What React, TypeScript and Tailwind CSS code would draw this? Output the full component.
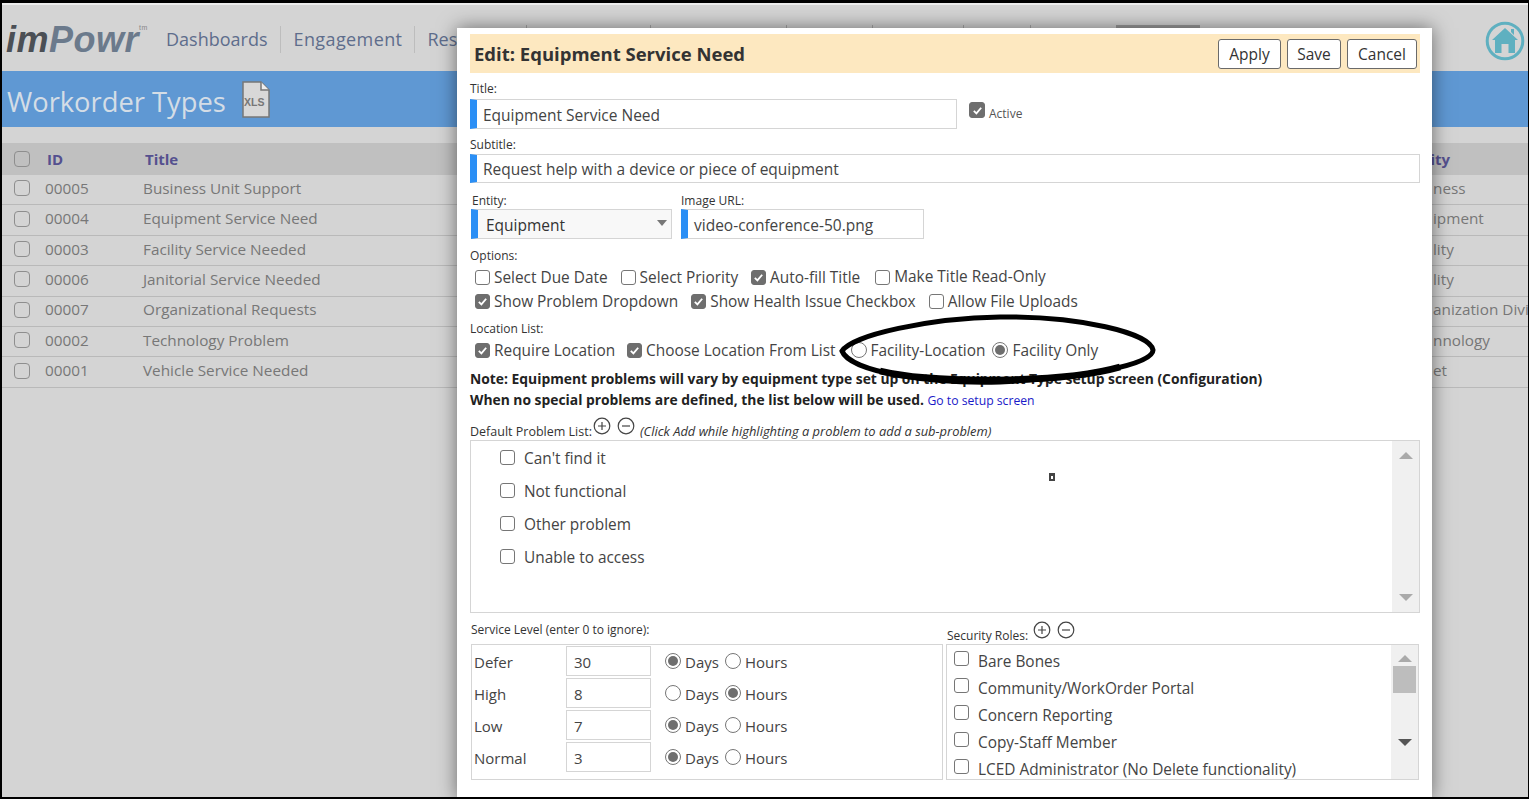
import React from "react";

const font = "font-['Open_Sans','Noto_Sans',sans-serif]";

const rows = [
  ["00005", "Business Unit Support", "ness"],
  ["00004", "Equipment Service Need", "ipment"],
  ["00003", "Facility Service Needed", "lity"],
  ["00006", "Janitorial Service Needed", "lity"],
  ["00007", "Organizational Requests", "anization Divi"],
  ["00002", "Technology Problem", "nnology"],
  ["00001", "Vehicle Service Needed", "et"],
];

function Check({ on = false, dim = false, className = "" }: { on?: boolean; dim?: boolean; className?: string }) {
  const tone = dim
    ? "w-[16px] h-[16px] rounded-[4px] border-[#8e8e8e]"
    : on
    ? "w-[15px] h-[15px] rounded-[3px] bg-[#6e6e6e] border-[#6e6e6e]"
    : "w-[15px] h-[15px] rounded-[3px] bg-white border-[#767676]";
  return (
    <span className={`inline-flex shrink-0 border items-center justify-center ${tone} ${className}`}>
      {on && (
        <svg viewBox="0 0 12 12" className="w-[11px] h-[11px]">
          <path d="M2 6.5 L4.8 9.2 L10 3" fill="none" stroke="#fff" strokeWidth="2" />
        </svg>
      )}
    </span>
  );
}

function Radio({ on = false }: { on?: boolean }) {
  return (
    <span className="inline-flex shrink-0 w-[16px] h-[16px] -translate-y-[1px] rounded-full border border-[#767676] bg-white items-center justify-center">
      {on && <span className="w-[10px] h-[10px] rounded-full bg-[#6e6e6e]" />}
    </span>
  );
}

function Opt({ on, label }: { on?: boolean; label: string }) {
  return (
    <span className="inline-flex items-center gap-[4px] text-[15.4px] text-[#444]">
      <Check on={on} />
      {label}
    </span>
  );
}

function Label({ children, className = "" }: { children: React.ReactNode; className?: string }) {
  return <div className={`text-[12px] leading-[16px] text-[#333] ${className}`}>{children}</div>;
}

function CircleBtn({ minus }: { minus?: boolean }) {
  return (
    <svg viewBox="0 0 18 18" className="w-[18px] h-[18px] shrink-0">
      <circle cx="9" cy="9" r="7.8" fill="none" stroke="#444" strokeWidth="1.2" />
      <path d={minus ? "M5 9 H13" : "M5 9 H13 M9 5 V13"} stroke="#444" strokeWidth="1.2" />
    </svg>
  );
}

function TextBox({ value, className = "" }: { value: string; className?: string }) {
  return (
    <div className={`flex items-center border border-[#d5d5d5] border-l-[7px] border-l-[#2b8ff5] bg-white pl-[6px] pt-[3px] text-[15.5px] text-[#444] ${className}`}>
      {value}
    </div>
  );
}

function ServiceRow({ label, value, days }: { label: string; value: string; days: boolean }) {
  return (
    <div className="flex items-center h-[32px] text-[15px] text-[#444]">
      <span className="w-[94px] pl-[2px] pt-[2px]">{label}</span>
      <span className="w-[85px] h-[30px] border border-[#d5d5d5] flex items-center pl-[7px] pt-[2px]">{value}</span>
      <span className="ml-[14px] flex items-center gap-[4px] pt-[2px]">
        <Radio on={days} />
        Days
      </span>
      <span className="ml-[6px] flex items-center gap-[4px] pt-[2px]">
        <Radio on={!days} />
        Hours
      </span>
    </div>
  );
}

function ScrollArrow({ up, dark }: { up?: boolean; dark?: boolean }) {
  if (up) {
    return <span className="w-0 h-0 border-x-[7px] border-x-transparent border-b-[7px] border-b-[#aaa]" />;
  }
  return (
    <span className={`w-0 h-0 border-x-[7px] border-x-transparent border-t-[7px] ${dark ? "border-t-[#555]" : "border-t-[#aaa]"}`} />
  );
}

export default function App() {
  return (
    <div className={`relative w-[1529px] h-[799px] overflow-hidden bg-[#d4d4d4] ${font}`}>
      {/* background page, dimmed */}
      <div className="flex items-center h-[71px] pl-[6px] pt-[8px]">
        <div className="flex items-baseline w-[160px] font-['Liberation_Sans',sans-serif] italic font-bold text-[36px] leading-none tracking-[0.5px]">
          <span className="text-[#4b4f55]">im</span>
          <span className="text-[#6b7a8c]">Powr</span>
          <span className="text-[7px] not-italic font-normal text-[#888] self-start mt-[2px]">tm</span>
        </div>
        <span className="text-[18px] text-[#5e6d8c] pr-[13px] border-r border-[#bdbdbd]">Dashboards</span>
        <span className="text-[18px] tracking-[0.4px] text-[#5e6d8c] px-[12px] border-r border-[#bdbdbd]">Engagement</span>
        <span className="text-[18px] text-[#5e6d8c] pl-[12px]">Res</span>
        <svg viewBox="0 0 40 40" className="absolute left-[1485px] top-[21px] w-[40px] h-[40px]">
          <circle cx="20" cy="20" r="17.8" fill="none" stroke="#5fb0c0" strokeWidth="3" />
          <path d="M20 7 L33 19 H30 V32 H23.5 V23 H16.5 V32 H10 V19 H7 Z M26 8 H29 V14 L26 11 Z" fill="#5fb0c0" />
        </svg>
      </div>
      {/* rest of the nav, only its top shows above the dialog */}
      {["left-[526px]", "left-[650px]", "left-[786px]", "left-[872px]", "left-[963px]", "left-[1030px]"].map((x) => (
        <span key={x} className={`absolute top-[25px] w-[1px] h-[3px] bg-[#a8a8a8] ${x}`} />
      ))}
      <span className="absolute top-[25px] left-[1116px] w-[84px] h-[3px] bg-[#9c9c9c]" />

      <div className="flex items-center h-[56px] bg-[#5f98d3] pl-[7px] gap-[16px]">
        <span className="text-[27.3px] text-[#d4dde6] pt-[7px]">Workorder Types</span>
        <svg viewBox="0 0 28 37" className="w-[28px] h-[37px]">
          <path d="M1 1 H19 L27 9 V36 H1 Z" fill="#d8d8d8" stroke="#777" strokeWidth="1.5" />
          <path d="M19 1 V9 H27" fill="#eee" stroke="#777" strokeWidth="1.5" />
          <text x="2" y="25" fontSize="10.5" fontWeight="700" fontFamily="Liberation Sans" fill="#777">XLS</text>
        </svg>
      </div>
      <div className="mt-[16px] flex items-center h-[32px] bg-[#c0c0c0] text-[15px] font-bold text-[#55508f]">
        <Check dim className="ml-[14px]" />
        <span className="ml-[17px] w-[98px]">ID</span>
        <span className="flex-1">Title</span>
        <span className="mr-[79px]">ity</span>
      </div>
      {rows.map((r) => (
        <div key={r[0]} className="flex items-center h-[30.4px] pb-[3px] border-b border-[#b9b9b9] text-[15.3px] text-[#777]">
          <Check dim className="ml-[14px]" />
          <span className="ml-[15px] w-[98px]">{r[0]}</span>
          <span className="flex-1">{r[1]}</span>
          <span className="absolute left-[1432px] pl-[1px]">{r[2]}</span>
        </div>
      ))}

      {/* dialog */}
      <div className="absolute left-[457px] top-[28px] w-[975px] h-[771px] bg-white shadow-[0_0_18px_rgba(0,0,0,0.5)] pl-[13px] pr-[12px] pt-[6px]">
        <div className="flex items-center justify-between h-[39px] bg-[#fde8c0] pl-[4px] pr-[3px]">
          <span className="text-[18.5px] font-bold text-[#333] pt-[1px]">Edit: Equipment Service Need</span>
          <div className="flex gap-[6px] text-[15.5px] text-[#333]">
            <span className="flex items-center justify-center w-[63px] h-[30px] pt-[3px] bg-white border border-[#6a6a6a] rounded-[3px]">Apply</span>
            <span className="flex items-center justify-center w-[54px] h-[30px] pt-[3px] bg-white border border-[#6a6a6a] rounded-[3px]">Save</span>
            <span className="flex items-center justify-center w-[70px] h-[30px] pt-[3px] bg-white border border-[#6a6a6a] rounded-[3px]">Cancel</span>
          </div>
        </div>
        <Label className="mt-[8px]">Title:</Label>
        <div className="flex mt-[2px]">
          <TextBox value="Equipment Service Need" className="w-[487px] h-[30px]" />
          <Check on className="ml-[12px] mt-[3px] w-[16px] h-[16px]" />
          <span className="ml-[4px] mt-[7px] text-[12px] leading-[16px] text-[#555]">Active</span>
        </div>
        <Label className="mt-[8px]">Subtitle:</Label>
        <TextBox value="Request help with a device or piece of equipment" className="mt-[1px] h-[29px]" />
        <div className="flex mt-[9px] pl-[1px] gap-[9px]">
          <div>
            <Label className="pl-[1px] mt-[1px]">Entity:</Label>
            <div className="flex items-center justify-between w-[201px] h-[30px] border border-[#d5d5d5] border-l-[7px] border-l-[#2b8ff5] bg-[#f8f8f8] pl-[8px] pr-[4px] pt-[3px] text-[15.5px] text-[#333]">
              Equipment
              <span className="w-0 h-0 -mt-[6px] border-x-[5px] border-x-transparent border-t-[6px] border-t-[#777]" />
            </div>
          </div>
          <div>
            <Label className="mt-[1px]">Image URL:</Label>
            <TextBox value="video-conference-50.png" className="w-[243px] h-[30px]" />
          </div>
        </div>
        <Label className="mt-[9px]">Options:</Label>
        <div className="flex gap-[13px] h-[24px] items-center mt-[2px] pl-[5px]">
          <Opt label="Select Due Date" />
          <Opt label="Select Priority" />
          <Opt on label="Auto-fill Title" />
          <span className="ml-[2px]"><Opt label="Make Title Read-Only" /></span>
        </div>
        <div className="flex gap-[13px] h-[24px] items-center pl-[5px]">
          <Opt on label="Show Problem Dropdown" />
          <Opt on label="Show Health Issue Checkbox" />
          <Opt label="Allow File Uploads" />
        </div>
        <Label className="mt-[7px]">Location List:</Label>
        <div className="flex h-[26px] items-center mt-[1px] pl-[5px] gap-[12px] text-[15.4px] text-[#444]">
          <Opt on label="Require Location" />
          <Opt on label="Choose Location From List" />
          <span className="flex items-center gap-[4px] ml-[3px]"><Radio />Facility-Location</span>
          <span className="flex items-center gap-[4px] -ml-[5px]"><Radio on />Facility Only</span>
        </div>
        <div className="mt-[4px] text-[13.85px] leading-[21px] font-bold text-[#222]">
          <div>Note: Equipment problems will vary by equipment type set up on the Equipment Type setup screen (Configuration)</div>
          <div>
            When no special problems are defined, the list below will be used.{" "}
            <span className="text-[12.2px] font-normal text-[#1a1ac8]">Go to setup screen</span>
          </div>
        </div>
        <div className="flex items-center mt-[13px] h-[16px] text-[12.5px] text-[#333]">
          Default Problem List:
          <span className="flex gap-[6px] ml-[1px] mr-[5px] -mt-[12px]"><CircleBtn /><CircleBtn minus /></span>
          <span className="italic text-[12.9px]">(Click Add while highlighting a problem to add a sub-problem)</span>
        </div>
        <div className="flex justify-between h-[173px] border border-[#d5d5d5]">
          <div className="pl-[29px] pt-[1px]">
            {["Can't find it", "Not functional", "Other problem", "Unable to access"].map((p) => (
              <div key={p} className="flex items-center h-[33px] gap-[9px] text-[15.4px] text-[#444]">
                <Check className="-mt-[3px]" />
                {p}
              </div>
            ))}
          </div>
          <div className="flex flex-col justify-between items-center w-[27px] bg-[#f0f0f0] py-[11px]">
            <ScrollArrow up />
            <ScrollArrow />
          </div>
        </div>
        <div className="flex mt-[9px] pl-[1px] gap-[3px]">
          <div className="w-[472px]">
            <Label className="h-[22px] text-[12.3px]">Service Level (enter 0 to ignore):</Label>
            <div className="h-[136px] border border-[#d5d5d5]">
              <ServiceRow label="Defer" value="30" days />
              <ServiceRow label="High" value="8" days={false} />
              <ServiceRow label="Low" value="7" days />
              <ServiceRow label="Normal" value="3" days />
            </div>
          </div>
          <div className="w-[473px]">
            <div className="flex items-center h-[22px] text-[12px] text-[#333] gap-[5px] pl-[1px]">
              <span className="pt-[6px]">Security Roles:</span>
              <span className="flex gap-[6px] -mt-[6px]"><CircleBtn /><CircleBtn minus /></span>
            </div>
            <div className="flex h-[136px] border border-[#d5d5d5] overflow-hidden">
              <div className="flex-1 pl-[7px] pt-[3px]">
                {["Bare Bones", "Community/WorkOrder Portal", "Concern Reporting", "Copy-Staff Member", "LCED Administrator (No Delete functionality)"].map((p) => (
                  <div key={p} className="flex items-center h-[27px] gap-[9px] text-[15.4px] text-[#444]">
                    <Check className="-mt-[7px]" />
                    {p}
                  </div>
                ))}
              </div>
              <div className="flex flex-col items-center w-[27px] bg-[#f0f0f0] py-[10px]">
                <ScrollArrow up />
                <span className="mt-[4px] w-[23px] h-[27px] bg-[#bdbdbd]" />
                <span className="mt-auto"><ScrollArrow dark /></span>
              </div>
            </div>
          </div>
        </div>
      </div>

      {/* hand-drawn ellipse */}
      <svg viewBox="0 0 1529 799" className="absolute inset-0 w-[1529px] h-[799px] pointer-events-none">
        <path
          d="M842 351 C852 335 930 318 1000 317 C1080 316 1150 333 1153 350 C1154 365 1080 378 1000 382 C930 384 850 372 842 351 Z"
          fill="none"
          stroke="#000"
          strokeWidth="5"
        />
        <path d="M880 371 C930 383 1060 384 1120 367" fill="none" stroke="#000" strokeWidth="6.5" />
      </svg>
      <span className="absolute left-[1049px] top-[473px] w-[6px] h-[8px] bg-[#444] pt-[3px] pl-[2px]">
        <span className="block w-[2px] h-[3px] bg-white" />
      </span>

      {/* black frame of the screenshot */}
      <div className="absolute inset-0 border-t-[3px] border-l-[2px] border-r-[1px] border-b-[2px] border-black pointer-events-none" />
      <div className="absolute left-[2px] right-[1px] top-[3px] h-[2px] bg-[#ececec]" />
    </div>
  );
}
